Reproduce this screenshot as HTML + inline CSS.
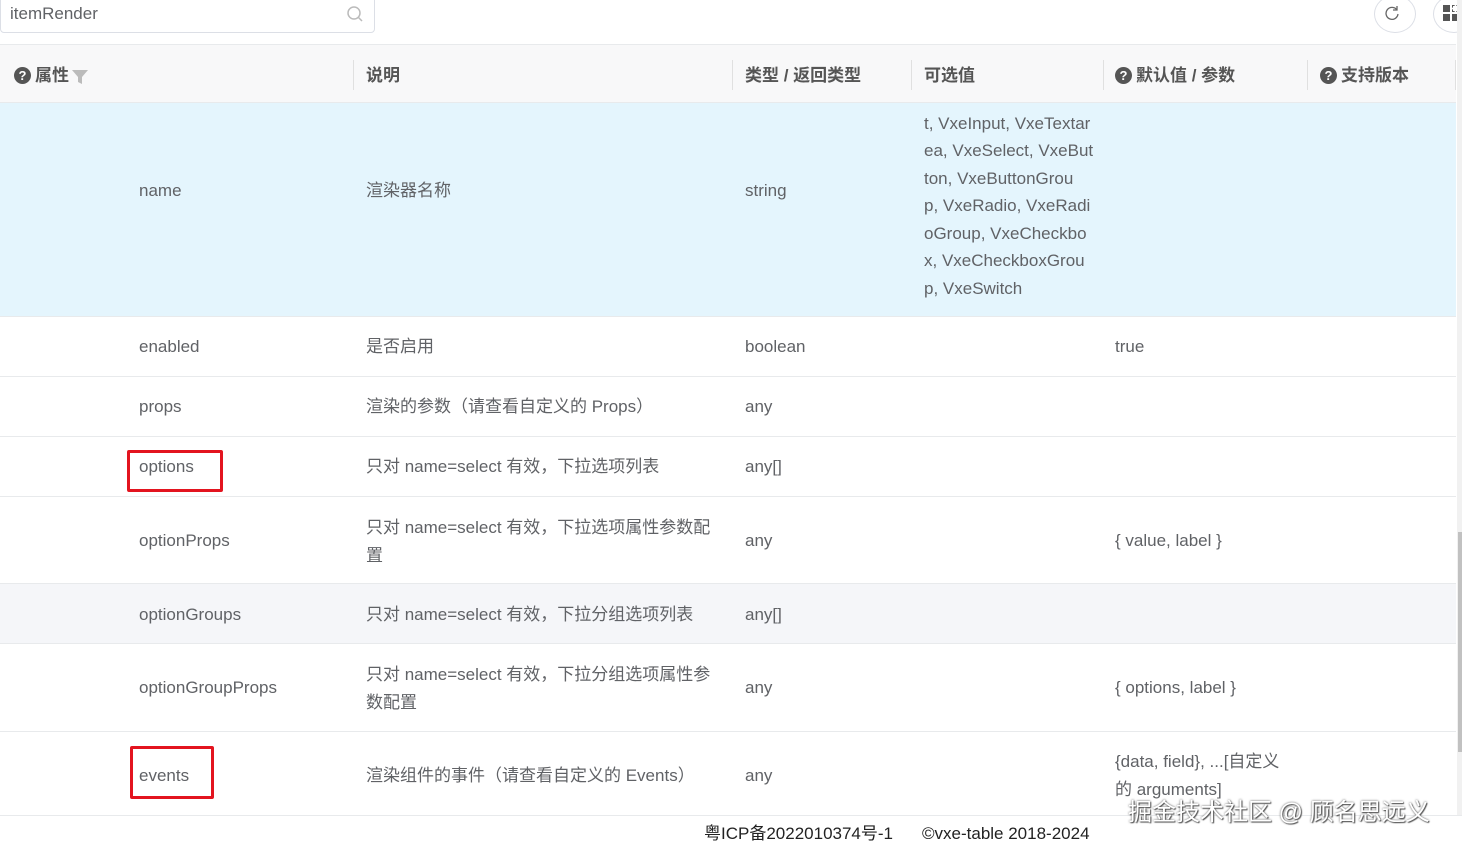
<!DOCTYPE html>
<html><head><meta charset="utf-8"><style>
*{margin:0;padding:0;box-sizing:border-box}
body{width:1462px;height:851px;overflow:hidden;background:#fff;font-family:"Liberation Sans","Noto Sans CJK SC",sans-serif;color:#606266;font-size:17px;position:relative}
.a{position:absolute;white-space:nowrap;line-height:24px}
.row{position:absolute;left:0;width:1456px;border-bottom:1px solid #e8eaec}
.h{font-weight:bold;color:#555;font-size:17px}
.q{display:inline-block;width:17px;height:17px;border-radius:50%;background:#555;color:#fff;font-size:13px;text-align:center;line-height:17px;vertical-align:1px;margin-right:4px}
.div{position:absolute;top:60px;width:1px;height:30px;background:#e0e0e0}
.red{position:absolute;border:3px solid #e3141f;border-radius:2px}
.w{line-height:27.5px}
</style></head><body>
<div class="a" style="left:0;top:-4px;width:375px;height:37px;border:1px solid #dcdfe6;border-radius:4px"></div>
<div class="a" style="left:10px;top:2px;color:#606266">itemRender</div>
<svg class="a" style="left:346px;top:5px" width="18" height="18"><circle cx="8" cy="8" r="6" fill="none" stroke="#bbb" stroke-width="1.5"/><line x1="12.5" y1="12.5" x2="16" y2="16" stroke="#bbb" stroke-width="1.5"/></svg>
<div class="a" style="left:1374px;top:-5px;width:42px;height:38px;border:1px solid #dcdfe6;border-radius:50%"></div>
<svg class="a" style="left:1384px;top:5px" width="16" height="16"><path d="M13 5A6 6 0 1 0 14 9" fill="none" stroke="#666" stroke-width="1.3"/><path d="M13 1V5H9" fill="none" stroke="#666" stroke-width="1.3"/></svg>
<div class="a" style="left:1433px;top:-5px;width:42px;height:38px;border:1px solid #dcdfe6;border-radius:50%"></div>
<div class="a" style="left:1443px;top:5px;width:7px;height:7px;background:#555"></div>
<div class="a" style="left:1452px;top:5px;width:7px;height:7px;border:1px dashed #555"></div>
<div class="a" style="left:1443px;top:14px;width:7px;height:7px;background:#555"></div>
<div class="a" style="left:1452px;top:14px;width:7px;height:7px;background:#555"></div>

<div class="a" style="left:0;top:44px;width:1456px;height:59px;background:#f8f8f9;border-top:1px solid #e8eaec;border-bottom:1px solid #e8eaec"></div>
<div class="div" style="left:353px"></div><div class="div" style="left:732px"></div><div class="div" style="left:911px"></div><div class="div" style="left:1103px"></div><div class="div" style="left:1307px"></div><div class="div" style="left:1455px"></div>
<div class="a h" style="left:14px;top:64px"><span class="q">?</span>属性<svg width="16" height="16" style="vertical-align:-3px;margin-left:3px"><path d="M0 2H16L10 9V16L6 14V9Z" fill="#bbb"/></svg></div>
<div class="a h" style="left:366px;top:64px">说明</div>
<div class="a h" style="left:745px;top:64px">类型 / 返回类型</div>
<div class="a h" style="left:924px;top:64px">可选值</div>
<div class="a h" style="left:1115px;top:64px"><span class="q">?</span>默认值 / 参数</div>
<div class="a h" style="left:1320px;top:64px"><span class="q">?</span>支持版本</div>

<div class="row" style="top:103px;height:214px;background:#e4f5fd"></div>
<div class="a" style="left:139px;top:179px">name</div>
<div class="a" style="left:366px;top:179px">渲染器名称</div>
<div class="a" style="left:745px;top:179px">string</div>
<div class="a w" style="left:924px;top:104px;height:212px;overflow:hidden"><div style="margin-top:-22px;line-height:27.5px">Vxe<br>t, VxeInput, VxeTextar<br>ea, VxeSelect, VxeBut<br>ton, VxeButtonGrou<br>p, VxeRadio, VxeRadi<br>oGroup, VxeCheckbo<br>x, VxeCheckboxGrou<br>p, VxeSwitch</div></div>

<div class="row" style="top:317px;height:60px"></div>
<div class="a" style="left:139px;top:335px">enabled</div><div class="a" style="left:366px;top:335px">是否启用</div><div class="a" style="left:745px;top:335px">boolean</div><div class="a" style="left:1115px;top:335px">true</div>
<div class="row" style="top:377px;height:60px"></div>
<div class="a" style="left:139px;top:395px">props</div><div class="a" style="left:366px;top:395px">渲染的参数（请查看自定义的 Props）</div><div class="a" style="left:745px;top:395px">any</div>
<div class="row" style="top:437px;height:60px"></div>
<div class="a" style="left:139px;top:455px">options</div><div class="a" style="left:366px;top:455px">只对 name=select 有效，下拉选项列表</div><div class="a" style="left:745px;top:455px">any[]</div>
<div class="red" style="left:127px;top:450px;width:96px;height:42px"></div>
<div class="row" style="top:497px;height:87px"></div>
<div class="a" style="left:139px;top:529px">optionProps</div><div class="a w" style="left:366px;top:514px">只对 name=select 有效，下拉选项属性参数配<br>置</div><div class="a" style="left:745px;top:529px">any</div><div class="a" style="left:1115px;top:529px">{ value, label }</div>
<div class="row" style="top:584px;height:60px;background:#f5f6f9"></div>
<div class="a" style="left:139px;top:603px">optionGroups</div><div class="a" style="left:366px;top:603px">只对 name=select 有效，下拉分组选项列表</div><div class="a" style="left:745px;top:603px">any[]</div>
<div class="row" style="top:644px;height:88px"></div>
<div class="a" style="left:139px;top:676px">optionGroupProps</div><div class="a w" style="left:366px;top:661px">只对 name=select 有效，下拉分组选项属性参<br>数配置</div><div class="a" style="left:745px;top:676px">any</div><div class="a" style="left:1115px;top:676px">{ options, label }</div>
<div class="row" style="top:732px;height:84px"></div>
<div class="a" style="left:139px;top:764px">events</div><div class="a" style="left:366px;top:764px">渲染组件的事件（请查看自定义的 Events）</div><div class="a" style="left:745px;top:764px">any</div><div class="a w" style="left:1115px;top:748px">{data, field}, ...[自定义<br>的 arguments]</div>
<div class="red" style="left:130px;top:746px;width:84px;height:53px"></div>

<div class="a" style="left:1457px;top:0;width:5px;height:816px;background:#f1f1f1"></div>
<div class="a" style="left:1458px;top:532px;width:4px;height:220px;background:#c1c1c1"></div>

<div class="a" style="left:0;top:815px;width:1462px;height:1px;background:#e8eaec"></div>
<div class="a" style="left:704px;top:822px;color:#222;font-size:17px">粤ICP备2022010374号-1</div>
<div class="a" style="left:922px;top:822px;color:#222;font-size:17px">©vxe-table 2018-2024</div>
<div class="a" style="left:1128px;top:798px;color:#fff;font-size:24px;line-height:30px;text-shadow:0 0 2px #555,1px 1px 1px #555">掘金技术社区 @ 顾名思远义</div>
</body></html>
